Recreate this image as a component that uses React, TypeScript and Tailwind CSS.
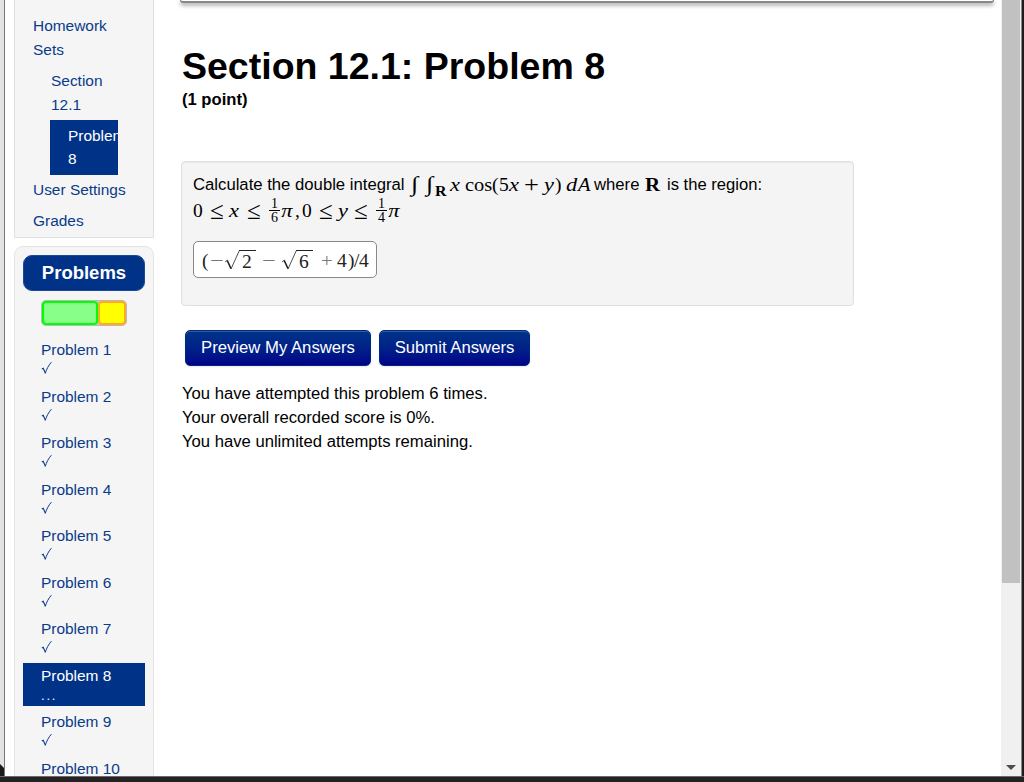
import type { ReactNode } from 'react';
import clsx from 'clsx';

const problems = [1, 2, 3, 4, 5, 6, 7, 8, 9, 10];
const current = 8;

function Check() {
  return (
    <svg width="12" height="14" viewBox="0 0 12 14" fill="none" stroke="currentColor">
      <path d="M0.8 7.9L2.2 7.2L4.3 12" strokeWidth="1.1" />
      <path d="M4.2 12.6C5.4 8.6 7.4 4.4 10.4 1.2" strokeWidth="1" />
    </svg>
  );
}

function Radical({ children }: { children: ReactNode }) {
  return (
    <span className="flex">
      <svg className="mt-[8px] -mr-px" width="16" height="20" viewBox="0 0 16 20" fill="none" stroke="#222">
        <path d="M1 12L3.4 10.2" strokeWidth="0.8" />
        <path d="M3.2 10.4L7 18.6" strokeWidth="1.5" />
        <path d="M7 19L15.2 0.8" strokeWidth="0.8" />
      </svg>
      <span className="mt-[8px] h-6 w-[17px] border-t border-[#222] pl-[3px] leading-[22px]">{children}</span>
    </span>
  );
}

function Frac({ top, bottom }: { top: string; bottom: string }) {
  return (
    <span className="flex w-[11px] flex-col items-center text-[14px]">
      <span className="flex h-[13px] w-full items-center justify-center border-b border-black">{top}</span>
      <span className="flex h-[14px] items-center">{bottom}</span>
    </span>
  );
}

// math italics are drawn a little wider than the text face
function Var({ children, className }: { children: string; className: string }) {
  return <i className={clsx('origin-left scale-x-[1.15] text-[19.5px]', className)}>{children}</i>;
}

function Rel({ className }: { className: string }) {
  return <span className={clsx('pl-px text-[25px]', className)}>≤</span>;
}

function NavItem({ children, className }: { children: ReactNode; className?: string }) {
  return <li className={clsx('py-[3.6px] leading-[23.8px]', className)}>{children}</li>;
}

function ActionButton({ children, className }: { children: string; className: string }) {
  return (
    <button
      className={clsx(
        'h-[36px] rounded-[5px] border border-[#002a80] bg-linear-to-b from-[#003388] to-[#000088] text-[16.7px] text-white shadow-[inset_0_1px_0_rgba(255,255,255,0.2),0_1px_2px_rgba(0,0,0,0.1)]',
        className
      )}
    >
      {children}
    </button>
  );
}

function Sidebar() {
  return (
    <aside className="w-[140px] shrink-0 text-[15.45px] text-[#0a3a8a]">
      <nav className="flex h-[238px] flex-col justify-end overflow-hidden border-x border-b border-[#e0e0e0] bg-[#f5f5f5]">
        <ul className="pb-[0.2px] pl-[18px]">
          <NavItem className="text-white">Courses</NavItem>
          <NavItem>Homework<br />Sets</NavItem>
          <NavItem className="ml-[18px]">Section<br />12.1</NavItem>
          <NavItem className="ml-[17px] w-[68px] overflow-hidden bg-[#003388] pl-[18px] text-white">Problem<br />8</NavItem>
          <NavItem className="whitespace-nowrap">User Settings</NavItem>
          <NavItem>Grades</NavItem>
        </ul>
      </nav>

      <section className="mt-[8px] h-[560px] rounded-t-[9px] border border-[#e3e3e3] bg-[#f5f5f5] px-[8px] pt-[8px]">
        <h2 className="flex h-[36px] items-center justify-center rounded-[9px] border border-[#1c4a98] bg-[#003388] text-[18.5px] font-bold text-white">
          Problems
        </h2>
        <div className="mt-[9px] ml-[18px] flex h-[26px] w-[86px] rounded-[5px] border border-[#b9b9b9] bg-[#c8c8c8]">
          <div className="w-[56px] rounded-[4px] border-2 border-[#00ff00] bg-[#88ff88]" />
          <div className="w-[28px] rounded-[4px] border-2 border-[#ffaa22] bg-[#ffff00]" />
        </div>
        <ul className="mt-[11px]">
          {problems.map(n => (
            <li
              key={n}
              className={clsx('mb-[3.55px] h-[43px] pl-[18px]', n === current && 'bg-[#003388] text-white')}
            >
              <div className="h-[24px] leading-[25px]">Problem {n}</div>
              {n === current ? <div className="pt-[2px] text-[13px] leading-[14px] tracking-[1.8px]">...</div> : <Check />}
            </li>
          ))}
        </ul>
      </section>
    </aside>
  );
}

function ProblemBody() {
  return (
    <div className="-ml-px mt-[49px] h-[145px] w-[673px] rounded-[4px] border border-[#e0e0e0] bg-[#f4f4f4] pt-[10px] pl-[11px] shadow-[inset_0_1px_1px_rgba(0,0,0,0.05)]">
      <div className="flex h-[26px] font-['Liberation_Serif',serif] text-[19.5px] leading-[25px] whitespace-nowrap">
        <span className="w-[218px] font-['Liberation_Sans',sans-serif] text-[16.7px] leading-[26px]">Calculate the double integral</span>
        <span className="w-[15px] origin-left scale-x-125 text-[21px]">∫</span>
        <span className="w-[9px] origin-left scale-x-125 text-[21px]">∫</span>
        <b className="w-[15px] origin-left scale-x-110 pt-[7px] text-[14.5px]">R</b>
        <Var className="w-[15px]">x</Var>
        <span className="w-[27px] origin-left scale-x-105">cos</span>
        <span className="w-[7px]">(</span>
        <span className="w-[10px]">5</span>
        <Var className="w-[15px]">x</Var>
        <span className="w-[20px] origin-left scale-x-110 text-[24px]">+</span>
        <Var className="w-[11px]">y</Var>
        <span className="w-[11px]">)</span>
        <Var className="w-[11px]">d</Var>
        <i className="w-[17px] origin-left scale-x-105 pl-px">A</i>
        <span className="w-[51px] font-['Liberation_Sans',sans-serif] text-[16.7px] leading-[26px]">where</span>
        <b className="w-[22px] origin-left scale-x-110 text-[19px]">R</b>
        <span className="font-['Liberation_Sans',sans-serif] text-[16.6px] leading-[26px]">is the region:</span>
      </div>

      <div className="flex h-[27px] font-['Liberation_Serif',serif] text-[19.5px] leading-[26px] whitespace-nowrap">
        <span className="w-[16px]">0</span>
        <Rel className="w-[20px]" />
        <Var className="w-[17px]">x</Var>
        <Rel className="w-[23px]" />
        <Frac top="1" bottom="6" />
        <Var className="w-[13px] pl-px">π</Var>
        <span className="w-[9px] pl-[2px]">,</span>
        <span className="w-[16px]">0</span>
        <Rel className="w-[20px]" />
        <Var className="w-[15px]">y</Var>
        <Rel className="w-[23px]" />
        <Frac top="1" bottom="4" />
        <Var className="pl-px">π</Var>
      </div>

      <div className="mt-[16px] flex h-[37px] w-[184px] rounded-[5px] border border-[#888] bg-white pl-[8px] font-['Liberation_Serif',serif] text-[19.5px] leading-[38px] whitespace-nowrap text-[#222]">
        <span className="w-[8px]">(</span>
        <span className="w-[14px] origin-left scale-x-125 text-[#777]">−</span>
        <Radical>2</Radical>
        <span className="w-[25px] pl-[6px] text-[#777]">
          <span className="inline-block origin-left scale-x-125">−</span>
        </span>
        <Radical>6</Radical>
        <span className="w-[24px] pl-[8px] text-[#777]">
          <span className="inline-block origin-left scale-x-105">+</span>
        </span>
        <span className="w-[11px]">4</span>
        <span className="w-[6px]">)</span>
        <span className="w-[5px]">/</span>
        <span>4</span>
      </div>
    </div>
  );
}

export default function App() {
  return (
    <div className="flex h-[782px] w-[1024px] flex-col overflow-hidden bg-white font-['Liberation_Sans',Arial,sans-serif] text-[16.65px] text-black">
      <div className="flex h-[776px] overflow-hidden">
        <div className="flex w-[5px] shrink-0 flex-col justify-end border-r border-[#777] bg-[#e2e3e5]">
          <svg width="4" height="12" viewBox="0 0 4 12">
            <path d="M0 0L4 4V12H0Z" fill="#1c1a1c" />
          </svg>
        </div>
        <div className="w-[9px] shrink-0" />
        <Sidebar />

        <main className="ml-[26px] flex-1">
          <div className="h-[3px] w-[814px] rounded-b-[6px] border-x border-b-2 border-[#888] bg-white shadow-[0_2px_4px_rgba(0,0,0,0.45)]" />
          <div className="pl-[2px]">
            <h1 className="mt-[40px] text-[37.5px] leading-[46px] font-bold whitespace-nowrap">Section 12.1: Problem 8</h1>
            <p className="mt-[-1px] text-[16.6px] leading-[24px] font-bold">(1 point)</p>
            <ProblemBody />
            <div className="mt-[24px] flex gap-[8px] pl-[3px]">
              <ActionButton className="w-[186px]">Preview My Answers</ActionButton>
              <ActionButton className="w-[151px]">Submit Answers</ActionButton>
            </div>
            <div className="mt-[16px] leading-[23.8px]">
              <p>You have attempted this problem 6 times.</p>
              <p>Your overall recorded score is 0%.</p>
              <p>You have unlimited attempts remaining.</p>
            </div>
          </div>
        </main>

        <div className="flex w-[20px] shrink-0 flex-col items-center bg-[#f0f0f0] pr-px">
          <div className="h-[583px] w-[18px] bg-[#c1c1c1]" />
          <svg className="mt-auto mb-[6px]" width="10" height="5" viewBox="0 0 10 5">
            <path d="M0 0H10L5 5Z" fill="#4d4d4d" />
          </svg>
        </div>
        <div className="w-[3px] shrink-0 border-l border-[#888] bg-[#1c1c1c]" />
      </div>
      <div className="h-[6px] border-t border-[#6a6a6a] bg-[#242223]" />
    </div>
  );
}
